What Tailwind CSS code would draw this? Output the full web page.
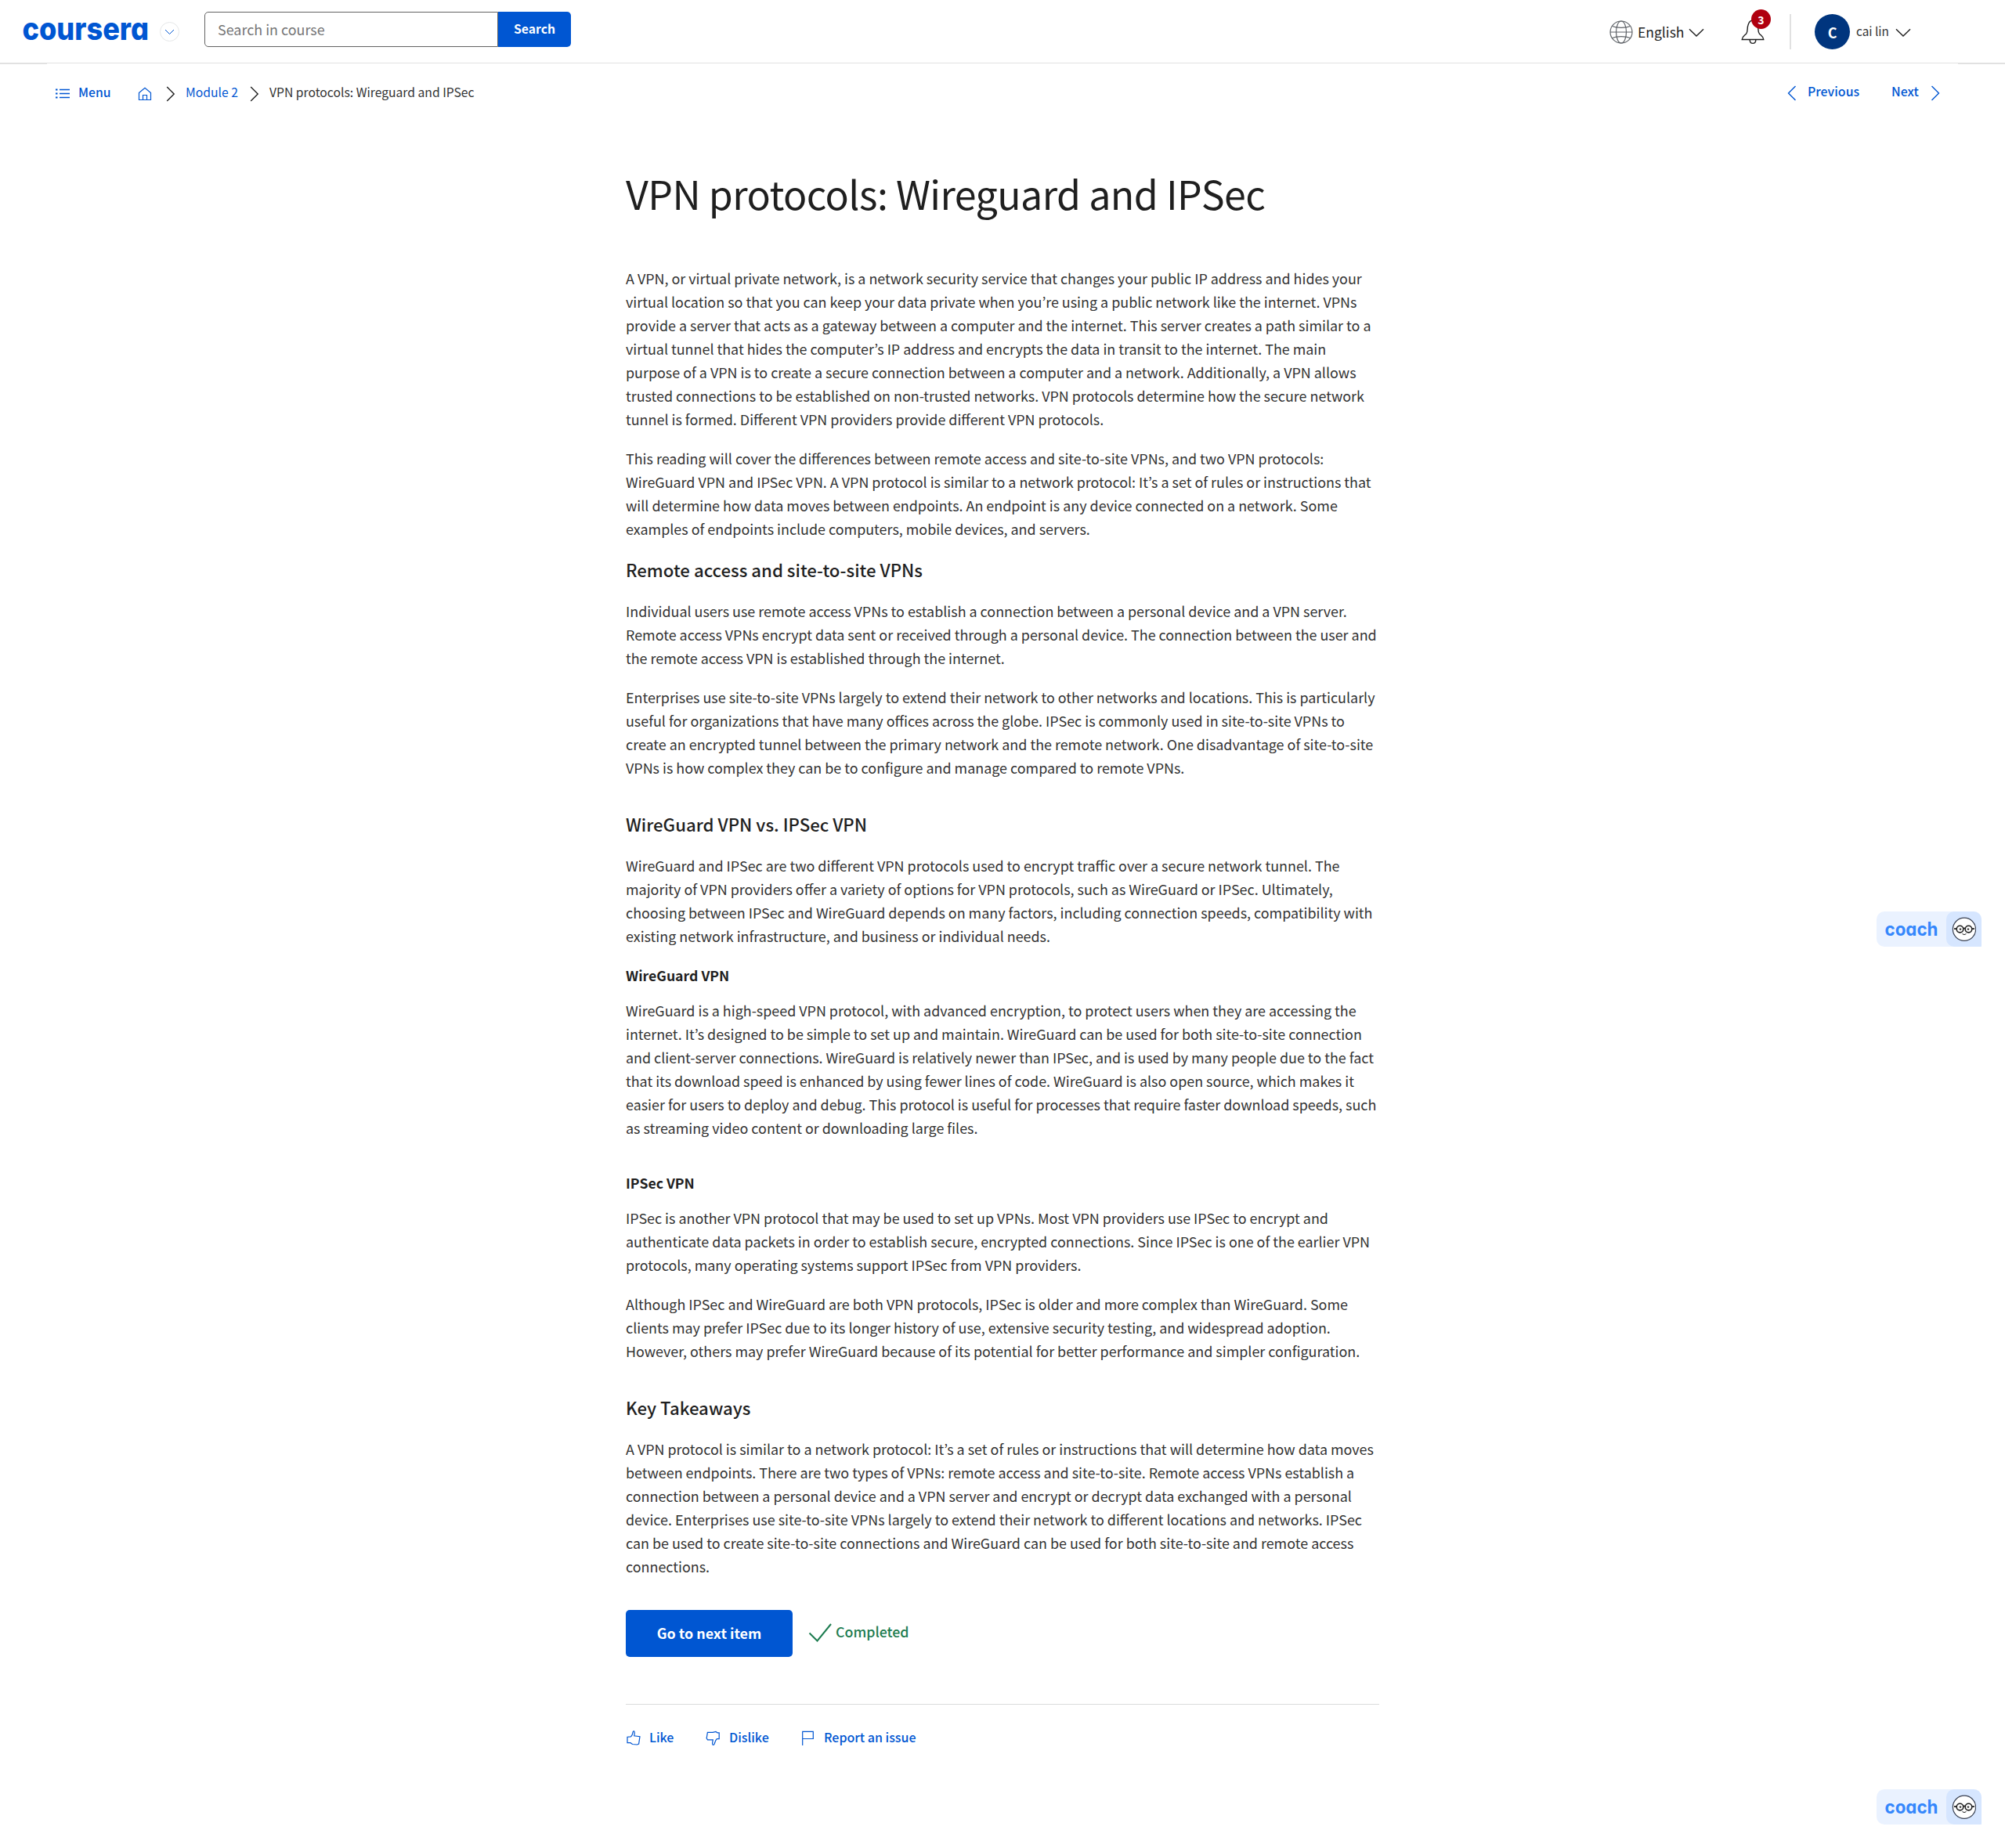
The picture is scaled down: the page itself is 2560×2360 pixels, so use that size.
<!DOCTYPE html>
<html lang="en">
<head>
<meta charset="utf-8">
<title>VPN protocols: Wireguard and IPSec | Coursera</title>
<script src="https://cdn.jsdelivr.net/npm/@tailwindcss/browser@4"></script>
</head>
<body class="relative h-[2360px] w-[2560px] overflow-hidden bg-white font-['Noto_Sans_CJK_KR','Noto_Sans',sans-serif] text-[17.91px] leading-[30px] text-[#1f1f1f]">

<header class="flex h-[81px] items-start border-b border-[#e1e1e1] bg-white">
  <svg class="mt-[15px] ml-[24px] h-[50px] w-[171px] shrink-0 overflow-visible [font-feature-settings:'cv11']" viewBox="0 0 171 50" fill="#0056d2">
    <text x="4.500" y="36" font-family="Inter, sans-serif" font-size="40" font-weight="800" textLength="161.500" lengthAdjust="spacingAndGlyphs">coursera</text>
  </svg>
  <svg class="mt-[28px] ml-[9px] size-[25px] shrink-0" viewBox="0 0 25 25" fill="none">
    <circle cx="12.5" cy="12.5" r="12" stroke="#e5e7e8"/>
    <path d="M7 10l5.5 5.500L18 10" stroke="#0056d2"/>
  </svg>
  <div class="mt-[15px] ml-[32px] flex h-[45px] w-[375px] items-center rounded-l-[5px] border border-[#636363] pb-[2px] pl-4 text-[#757575]">Search in course</div>
  <div class="mt-[15px] flex h-[45px] w-[93px] items-center justify-center rounded-r-[5px] bg-[#0056d2] pb-[2px] text-[15.7px] font-bold text-white">Search</div>

  <svg class="mt-[26px] ml-[1326px] size-[30px] shrink-0" viewBox="0 0 30 30" fill="none" stroke="#5f6368" stroke-width="1.2">
    <circle cx="15" cy="15" r="14"/>
    <ellipse cx="15" cy="15" rx="6.500" ry="14"/>
    <path d="M1 15h28M3.500 7.500C9.500 10 20.500 10 26.500 7.500M3.500 22.500C9.500 20 20.500 20 26.500 22.500"/>
  </svg>
  <span class="mt-[26px] ml-[6px] w-[60px] text-[17.5px] whitespace-nowrap">English</span>
  <svg class="mt-[36px] ml-[5px] h-[12px] w-[20px] shrink-0" viewBox="0 0 20 12" fill="none" stroke="#1f1f1f" stroke-width="1.400"><path d="M1 1.200l9 8.800 9-8.800"/></svg>

  <div class="relative mt-[12px] ml-[47px] h-[46px] w-[40px] shrink-0">
    <svg class="h-[46px] w-[30px]" viewBox="0 0 30 46" fill="none" stroke="#1f1f1f" stroke-width="1.400">
      <path d="M1.200 38.500C1.500 34.800 3.500 34 6.500 31.200C9 28 7.500 24.500 8.800 20.500C10 16 12 14 15 14C18 14 20 16 21.200 20.500C22.500 24.500 21 28 23.500 31.200C26.500 34 28.500 34.800 28.800 38.500Z"/>
      <path d="M11.200 39c0 5.800 7.600 5.800 7.600 0"/>
    </svg>
    <span class="absolute top-0 left-[13px] flex size-[25px] items-center justify-center rounded-full bg-[#b0000f] text-[14px] font-bold text-white">3</span>
  </div>
  <div class="mt-[18px] ml-[22px] h-[45px] w-[2px] bg-[#e1e1e1]"></div>
  <div class="mt-[18px] ml-[30px] flex size-[45px] shrink-0 items-center justify-center rounded-full bg-[#00357e] font-bold text-white">C</div>
  <span class="mt-[24px] ml-[8px] w-[44px] text-[15.300px] whitespace-nowrap text-[#333]">cai lin</span>
  <svg class="mt-[36px] ml-[6px] h-[12px] w-[20px] shrink-0" viewBox="0 0 20 12" fill="none" stroke="#1f1f1f" stroke-width="1.400"><path d="M1 1.200l9 8.800 9-8.800"/></svg>
</header>
<div class="flex h-px justify-between"><span class="w-[60px] bg-[#e1e1e1]"></span><span class="w-[60px] bg-[#e1e1e1]"></span></div>

<nav class="flex h-[72px] items-center pl-[71px] text-[15.700px]">
  <svg class="mt-[3px] h-[14px] w-[18px]" viewBox="0 0 18 14" fill="none" stroke="#0056d2"><path d="M5 1.500h13M5 6.500h13M5 11.500h13" stroke-width="1.300"/><path d="M0 1.500h2.500M0 6.500h2.500M0 11.500h2.500" stroke-width="2.200"/></svg>
  <span class="ml-[11px] w-[43px] font-medium text-[#0056d2]">Menu</span>
  <svg class="mt-[3px] ml-[33px] h-[18px] w-[18px]" viewBox="0 0 18 18" fill="none" stroke="#0056d2" stroke-width="1.200"><path d="M1.500 7.500L9 1.200l7.500 6.300V16.500h-15zM6.500 16.500V10.500h5v6"/></svg>
  <svg class="mt-[3px] ml-[18px] h-[20px] w-[12px]" viewBox="0 0 12 20" fill="none" stroke="#1f1f1f" stroke-width="1.400"><path d="M1.200 1l9 9-9 9"/></svg>
  <span class="ml-[13px] w-[69px] text-[#0056d2] whitespace-nowrap">Module 2</span>
  <svg class="mt-[3px] ml-[13px] h-[20px] w-[12px]" viewBox="0 0 12 20" fill="none" stroke="#1f1f1f" stroke-width="1.400"><path d="M1.200 1l9 9-9 9"/></svg>
  <span class="ml-[13px] whitespace-nowrap text-[#333]">VPN protocols: Wireguard and IPSec</span>
  <div class="mr-[83px] ml-auto flex items-center pb-[2px] font-medium text-[#0056d2]">
    <svg class="mt-[3px] h-[20px] w-[12px]" viewBox="0 0 12 20" fill="none" stroke="currentColor" stroke-width="1.400"><path d="M10.500 1l-9 9 9 9"/></svg>
    <span class="ml-[14px] w-[68px] text-[15.900px]">Previous</span>
    <span class="ml-[39px] w-[36px] text-[15.900px]">Next</span>
    <svg class="mt-[3px] ml-[14px] h-[20px] w-[12px]" viewBox="0 0 12 20" fill="none" stroke="currentColor" stroke-width="1.400"><path d="M1.500 1l9 9-9 9"/></svg>
  </div>
</nav>

<main class="mt-[57px] ml-[799px] w-[962px]">
  <h1 class="mb-[59px] text-[50.100px] leading-[70px] tracking-[-0.560px] whitespace-nowrap">VPN protocols: Wireguard and IPSec</h1>

  <div class="text-[#333]">
  <p class="mb-5">A VPN, or virtual private network, is a network security service that changes your public IP address and hides your virtual location so that you can keep your data private when you’re using a public network like the internet. VPNs provide a server that acts as a gateway between a computer and the internet. This server creates a path similar to a virtual tunnel that hides the computer’s IP address and encrypts the data in transit to the internet. The main purpose of a VPN is to create a secure connection between a computer and a network. Additionally, a VPN allows trusted connections to be established on non-trusted networks. VPN protocols determine how the secure network tunnel is formed. Different VPN providers provide different VPN protocols.</p>
  <p>This reading will cover the differences between remote access and site-to-site VPNs, and two VPN protocols: WireGuard VPN and IPSec VPN. A VPN protocol is similar to a network protocol: It’s a set of rules or instructions that will determine how data moves between endpoints. An endpoint is any device connected on a network. Some examples of endpoints include computers, mobile devices, and servers.</p>

  <h2 class="mt-[22px] mb-[23px] text-[22.200px] font-medium text-[#1f1f1f]">Remote access and site-to-site VPNs</h2>
  <p class="mb-5">Individual users use remote access VPNs to establish a connection between a personal device and a VPN server. Remote access VPNs encrypt data sent or received through a personal device. The connection between the user and the remote access VPN is established through the internet.</p>
  <p>Enterprises use site-to-site VPNs largely to extend their network to other networks and locations. This is particularly useful for organizations that have many offices across the globe. IPSec is commonly used in site-to-site VPNs to create an encrypted tunnel between the primary network and the remote network. One disadvantage of site-to-site VPNs is how complex they can be to configure and manage compared to remote VPNs.</p>

  <h2 class="mt-[42px] mb-[23px] text-[22.200px] font-medium text-[#1f1f1f]">WireGuard VPN vs. IPSec VPN</h2>
  <p>WireGuard and IPSec are two different VPN protocols used to encrypt traffic over a secure network tunnel. The majority of VPN providers offer a variety of options for VPN protocols, such as WireGuard or IPSec. Ultimately, choosing between IPSec and WireGuard depends on many factors, including connection speeds, compatibility with existing network infrastructure, and business or individual needs.</p>

  <h3 class="mt-[21px] mb-[14px] text-[17.650px] font-bold text-[#1f1f1f]">WireGuard VPN</h3>
  <p>WireGuard is a high-speed VPN protocol, with advanced encryption, to protect users when they are accessing the internet. It’s designed to be simple to set up and maintain. WireGuard can be used for both site-to-site connection and client-server connections. WireGuard is relatively newer than IPSec, and is used by many people due to the fact that its download speed is enhanced by using fewer lines of code. WireGuard is also open source, which makes it easier for users to deploy and debug. This protocol is useful for processes that require faster download speeds, such as streaming video content or downloading large files.</p>

  <h3 class="mt-[41px] mb-[14px] text-[17.650px] font-bold text-[#1f1f1f]">IPSec VPN</h3>
  <p class="mb-5">IPSec is another VPN protocol that may be used to set up VPNs. Most VPN providers use IPSec to encrypt and authenticate data packets in order to establish secure, encrypted connections. Since IPSec is one of the earlier VPN protocols, many operating systems support IPSec from VPN providers.</p>
  <p>Although IPSec and WireGuard are both VPN protocols, IPSec is older and more complex than WireGuard. Some clients may prefer IPSec due to its longer history of use, extensive security testing, and widespread adoption. However, others may prefer WireGuard because of its potential for better performance and simpler configuration.</p>

  <h2 class="mt-[42px] mb-[23px] text-[22.200px] font-medium text-[#1f1f1f]">Key Takeaways</h2>
  <p>A VPN protocol is similar to a network protocol: It’s a set of rules or instructions that will determine how data moves between endpoints. There are two types of VPNs: remote access and site-to-site. Remote access VPNs establish a connection between a personal device and a VPN server and encrypt or decrypt data exchanged with a personal device. Enterprises use site-to-site VPNs largely to extend their network to different locations and networks. IPSec can be used to create site-to-site connections and WireGuard can be used for both site-to-site and remote access connections.</p>
  </div>

  <div class="mt-[41px] flex h-[60px] items-center">
    <div class="flex h-[60px] w-[213px] items-center justify-center rounded-[5px] bg-[#0056d2] pb-[2px] font-bold text-white">Go to next item</div>
    <svg class="ml-[20px] h-[26px] w-[30px]" viewBox="0 0 30 26" fill="none" stroke="#1d7c50" stroke-width="2"><path d="M1.500 12.500L11.500 22.500 29 1"/></svg>
    <span class="mb-[7px] ml-[5px] text-[17.800px] font-medium text-[#1d7c50]">Completed</span>
  </div>

  <div class="mt-[60px] h-px bg-[#dadcdc]"></div>
  <div class="mt-[26px] flex h-[30px] items-center text-[16px] font-medium text-[#0056d2]">
    <svg class="mt-[3px] ml-[1px] size-[20px]" viewBox="0 0 20 20" fill="none" stroke="currentColor" stroke-width="1.200"><path d="M5.200 7.900C7.200 7.200 7.400 5 8 2.700C8.200 1 9 .6 9.600 .8C11 1.500 10 5 9.700 6.800L17 7.700L15.600 17.100L13.500 18L7.500 17.500L5 15.700H1V8.200Z"/></svg>
    <span class="ml-[9px] w-[32px]">Like</span>
    <svg class="mt-[3px] ml-[40px] size-[20px]" viewBox="0 0 20 20" fill="none" stroke="currentColor" stroke-width="1.200"><path d="M2.400 2.300L9 2.400L13 1.500L15 2.800H17.200V10.700H14.200C12.500 12 12 14.500 11.200 17C10.500 19 8.800 18.700 8.600 17C8.500 15.500 9 13.500 9.300 11.800L2.500 11.800L1.200 9.800Z"/></svg>
    <span class="ml-[10px] w-[52px]">Dislike</span>
    <svg class="mt-[3px] ml-[40px] size-[20px]" viewBox="0 0 20 20" fill="none" stroke="currentColor" stroke-width="1.200"><path d="M1.700 19V1.300H15.300V10.500H1.700"/></svg>
    <span class="ml-[9px] whitespace-nowrap">Report an issue</span>
  </div>
</main>

<div class="absolute top-[1164px] left-[2396px] flex h-[45px] w-[134px] rounded-[10px] rounded-br-[1px] bg-[#eaf2ff]">
  <svg class="h-[45px] w-[89px] [font-feature-settings:'cv11']" viewBox="0 0 89 45" fill="#3587fc"><text x="10.500" y="31" font-family="Inter, sans-serif" font-size="24" font-weight="700" textLength="68" lengthAdjust="spacingAndGlyphs">coach</text></svg>
  <div class="flex size-[45px] items-center justify-center rounded-[10px] rounded-br-[1px] bg-[#d6e6ff]">
    <svg class="size-[31px]" viewBox="0 0 31 31" fill="none" stroke="#1f1f1f"><circle cx="16" cy="15.800" r="14.600" fill="#fff" stroke="#3b4252" stroke-width="1.200"/><g stroke-width="1.600"><circle cx="10.500" cy="15.600" r="4.300"/><circle cx="21.500" cy="15.600" r="4.300"/><path d="M14.500 14.800q1.500-1 3 0M3 15.100h3.200M25.800 15.100h3.200"/></g><path d="M13.500 21.600q2.500 2 5 0"/><circle cx="11" cy="15.600" r=".8" fill="#1f1f1f"/><circle cx="21" cy="15.600" r=".8" fill="#1f1f1f"/></svg>
  </div>
</div>
<div class="absolute top-[2285px] left-[2396px] flex h-[45px] w-[134px] rounded-[10px] rounded-br-[1px] bg-[#eaf2ff]">
  <svg class="h-[45px] w-[89px] [font-feature-settings:'cv11']" viewBox="0 0 89 45" fill="#3587fc"><text x="10.500" y="31" font-family="Inter, sans-serif" font-size="24" font-weight="700" textLength="68" lengthAdjust="spacingAndGlyphs">coach</text></svg>
  <div class="flex size-[45px] items-center justify-center rounded-[10px] rounded-br-[1px] bg-[#d6e6ff]">
    <svg class="size-[31px]" viewBox="0 0 31 31" fill="none" stroke="#1f1f1f"><circle cx="16" cy="15.800" r="14.600" fill="#fff" stroke="#3b4252" stroke-width="1.200"/><g stroke-width="1.600"><circle cx="10.500" cy="15.600" r="4.300"/><circle cx="21.500" cy="15.600" r="4.300"/><path d="M14.500 14.800q1.500-1 3 0M3 15.100h3.200M25.800 15.100h3.200"/></g><path d="M13.500 21.600q2.500 2 5 0"/><circle cx="11" cy="15.600" r=".8" fill="#1f1f1f"/><circle cx="21" cy="15.600" r=".8" fill="#1f1f1f"/></svg>
  </div>
</div>
</body>
</html>
